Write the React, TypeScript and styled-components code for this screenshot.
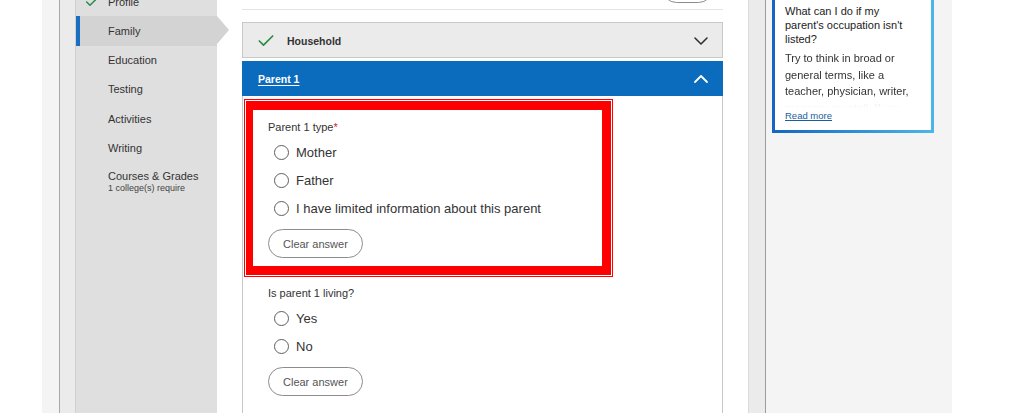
import styled, { createGlobalStyle, css } from "styled-components";
import { Check, ChevronDown, ChevronUp } from "lucide-react";

const GlobalStyle = createGlobalStyle`
  *, *::before, *::after {
    box-sizing: border-box;
  }
  html, body {
    margin: 0;
    padding: 0;
    background: #fff;
    overflow: hidden;
  }
  body {
    font-family: "Liberation Sans", Arial, sans-serif;
    color: #333;
  }
`;

// page is scrolled a little, so the frame starts above the viewport
const Frame = styled.div`
  display: flex;
  width: 910px;
  height: 443px;
  margin: -30px 0 0 42px;
  background: #f4f4f4;
`;

const Gutter = styled.div`
  width: 18px;
  border-right: 1px solid #a9a9a9;
  background: #f4f4f4;
`;

const Rail = styled.div<{ $right?: boolean }>`
  width: ${(p) => (p.$right ? 18 : 16)}px;
  background: #ebebeb;
  border-right: 1px solid ${(p) => (p.$right ? "#9c9c9c" : "#d0d0d0")};
  border-left: ${(p) => (p.$right ? "1px solid #dadada" : "none")};
`;

const Sidebar = styled.nav`
  position: relative;
  z-index: 1;
  width: 141px;
  padding-top: 17px;
  background: #dfdfdf;
`;

const NavItem = styled.div<{ $active?: boolean; $tall?: boolean }>`
  position: relative;
  display: flex;
  align-items: ${(p) => (p.$tall ? "flex-start" : "center")};
  height: 29.25px;
  padding: ${(p) => (p.$tall ? "7px 0 0 8px" : "0 0 0 8px")};
  font-size: 11px;
  line-height: 12px;
  color: #333;
  background: ${(p) => (p.$active ? "#d3d3d3" : "transparent")};

  ${(p) =>
    p.$active &&
    css`
      &::before {
        content: "";
        position: absolute;
        left: 0;
        top: 0;
        bottom: 0;
        width: 4px;
        background: #1a6dc0;
      }
      &::after {
        content: "";
        position: absolute;
        left: 100%;
        top: 0;
        border-top: 14.625px solid transparent;
        border-bottom: 14.625px solid transparent;
        border-left: 12px solid #d3d3d3;
      }
    `}
`;

const NavIcon = styled.span`
  display: flex;
  align-items: center;
  width: 24px;
  color: #2a8c46;
`;

const NavLabel = styled.div`
  display: flex;
  flex-direction: column;
`;

const NavSub = styled.span`
  font-size: 9px;
  line-height: 12px;
  color: #444;
`;

const Main = styled.main`
  display: flex;
  flex-direction: column;
  width: 531px;
  padding: 4px 25px 0;
  background: #fff;
`;

const TopRow = styled.div`
  display: flex;
  justify-content: flex-end;
  padding: 0 10px 6px 0;
  border-bottom: 1px solid #e3e3e3;
`;

const PillButton = styled.button`
  width: 51px;
  height: 29px;
  border: 1.5px solid #8c8c8c;
  border-radius: 15px;
  background: #fff;
`;

const SectionHeader = styled.div<{ $open?: boolean }>`
  display: flex;
  align-items: center;
  height: ${(p) => (p.$open ? 35 : 36)}px;
  margin-top: ${(p) => (p.$open ? 3 : 12)}px;
  padding: 1px 9px 0 ${(p) => (p.$open ? 15 : 13)}px;
  border: 1px solid ${(p) => (p.$open ? "#0b6cbd" : "#c9c9c9")};
  background: ${(p) => (p.$open ? "#0b6cbd" : "#ebebeb")};
  color: ${(p) => (p.$open ? "#fff" : "#333")};
  font-size: 10.5px;
  font-weight: 700;
`;

const HeaderCheck = styled.span`
  display: flex;
  width: 31px;
  color: #2a8c46;
`;

const HeaderTitle = styled.span<{ $link?: boolean }>`
  flex: 1;
  text-decoration: ${(p) => (p.$link ? "underline" : "none")};
  text-underline-offset: 2px;
`;

const Panel = styled.section`
  flex: 1;
  padding: 5px 0 0 0;
  border-left: 1px solid #c8c8c8;
  border-right: 1px solid #c8c8c8;
`;

const Callout = styled.div`
  width: 365px;
  margin-left: 3px;
  padding: 10px 15px 8px;
  border-style: solid;
  border-color: #ff0000;
  border-width: 9px 9px 9px 7px;
  box-shadow: 0 0 0 1px #fff, 0 0 0 2px #ff0000;
`;

const Question = styled.div`
  margin: 11px 0 0 25px;
`;

const Label = styled.div`
  font-size: 11px;
  line-height: 14px;
  color: #333;

  em {
    font-style: normal;
    color: #e0102b;
  }
`;

const RadioList = styled.div`
  margin-top: 4px;
`;

const RadioRow = styled.label`
  display: flex;
  align-items: center;
  gap: 7px;
  height: 28px;
  padding-left: 6px;
  font-size: 13px;
  color: #333;
`;

const RadioCircle = styled.span`
  width: 15px;
  height: 15px;
  border: 1.5px solid #5e5e5e;
  border-radius: 50%;
  background: #fff;
`;

const ClearButton = styled.button`
  display: block;
  height: 29px;
  margin-top: 7px;
  padding: 0 14px;
  border: 1.5px solid #8d8d8d;
  border-radius: 15px;
  background: #fff;
  font-family: inherit;
  font-size: 11px;
  color: #555;
`;

const RightPanel = styled.aside`
  width: 186px;
  padding: 10px 0 0 6px;
  background: #f4f4f4;
`;

const HelpCard = styled.div`
  width: 162px;
  padding: 21px 12px 8px 10px;
  border: 3px solid;
  border-image: linear-gradient(to right, #1466c2, #4cb5e8) 1;
  background: #fff;
`;

const CardTitle = styled.div`
  font-size: 11px;
  line-height: 14px;
  color: #222;
`;

const CardBody = styled.div`
  margin-top: 4px;
  max-height: 58px;
  overflow: hidden;
  font-size: 11px;
  line-height: 16.5px;
  color: #333;
  mask-image: linear-gradient(to bottom, #000 78%, rgba(0, 0, 0, 0.15) 90%, transparent 100%);
`;

const ReadMore = styled.a`
  display: block;
  margin-top: 2px;
  font-size: 9.5px;
  line-height: 12px;
  color: #1b5e9e;
  text-decoration: underline;
`;

const navItems = ["Education", "Testing", "Activities", "Writing"];

const Radio = ({ text }: { text: string }) => (
  <RadioRow>
    <RadioCircle />
    {text}
  </RadioRow>
);

const App = () => {
  return (
    <>
      <GlobalStyle />
      <Frame>
        <Gutter />
        <Rail />
        <Sidebar>
          <NavItem>
            <NavIcon>
              <Check size={16} strokeWidth={2.2} />
            </NavIcon>
            Profile
          </NavItem>
          <NavItem $active>
            <NavIcon />
            Family
          </NavItem>
          {navItems.map((item) => (
            <NavItem key={item}>
              <NavIcon />
              {item}
            </NavItem>
          ))}
          <NavItem $tall>
            <NavIcon />
            <NavLabel>
              Courses &amp; Grades
              <NavSub>1 college(s) require</NavSub>
            </NavLabel>
          </NavItem>
        </Sidebar>

        <Main>
          <TopRow>
            <PillButton aria-label="Back" />
          </TopRow>

          <SectionHeader>
            <HeaderCheck>
              <Check size={20} strokeWidth={2} />
            </HeaderCheck>
            <HeaderTitle>Household</HeaderTitle>
            <ChevronDown size={24} strokeWidth={1.6} color="#333" />
          </SectionHeader>

          <SectionHeader $open>
            <HeaderTitle $link>Parent 1</HeaderTitle>
            <ChevronUp size={24} strokeWidth={1.8} color="#fff" />
          </SectionHeader>

          <Panel>
            <Callout>
              <Label>
                Parent 1 type<em>*</em>
              </Label>
              <RadioList>
                <Radio text="Mother" />
                <Radio text="Father" />
                <Radio text="I have limited information about this parent" />
              </RadioList>
              <ClearButton>Clear answer</ClearButton>
            </Callout>

            <Question>
              <Label>Is parent 1 living?</Label>
              <RadioList>
                <Radio text="Yes" />
                <Radio text="No" />
              </RadioList>
              <ClearButton>Clear answer</ClearButton>
            </Question>
          </Panel>
        </Main>

        <Rail $right />
        <RightPanel>
          <HelpCard>
            <CardTitle>What can I do if my parent's occupation isn't listed?</CardTitle>
            <CardBody>
              Try to think in broad or general terms, like a teacher, physician, writer,
              manager or retail. If you are unsure, pick the closest match.
            </CardBody>
            <ReadMore href="#">Read more</ReadMore>
          </HelpCard>
        </RightPanel>
      </Frame>
    </>
  );
};

export default App;
